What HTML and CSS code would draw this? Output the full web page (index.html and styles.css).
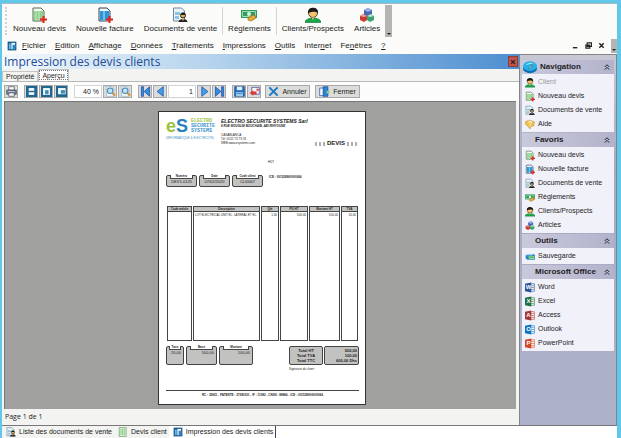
FILE: index.html
```html
<!DOCTYPE html>
<html lang="fr">
<head>
    <meta charset="UTF-8">
    <title>Impression des devis clients</title>
    <meta name="viewport" content="width=device-width, initial-scale=1.0">
    <link rel="stylesheet" href="styles.css">
</head>
<body>
    <!-- Icons -->
    <svg class="sprite" aria-hidden="true">
        <symbol id="i-devis" viewBox="0 0 16 16"><path d="M2 1h8l3 3v10H2z" fill="#f4fbf2" stroke="#4f6a4c"/><path d="M3 4h9v9H3z" fill="#8fd08a"/><path d="M5 4v9M8 4v9" stroke="#c4eabf"/><path d="M12.500 9v7M9 12.500h7" stroke="#e0241c" stroke-width="2"/></symbol>
        <symbol id="i-facture" viewBox="0 0 16 16"><path d="M2 1h8l3 3v10H2z" fill="#eaf5fc" stroke="#345"/><path d="M3 4h9v9H3z" fill="#2f93d6"/><path d="M7 4v9" stroke="#bfe4fa"/><path d="M12.500 9v7M9 12.500h7" stroke="#e0241c" stroke-width="2"/></symbol>
        <symbol id="i-docs" viewBox="0 0 16 16"><path d="M1.500 1h8l3 3v10h-11z" fill="#e8f3fa" stroke="#6f8795"/><path d="M3 5h5v3H3zM3 9h4v3H3z" fill="#8fc3e4"/><circle cx="11" cy="8.500" r="2.500" fill="#e8b04c" stroke="#222"/><path d="M8.500 8a2.500 2.500 0 0 1 5 0z" fill="#222"/><path d="M6.500 15c0-4 9-4 9 0z" fill="#222"/><path d="M10 12l1 2 1-2z" fill="#f0c020"/></symbol>
        <symbol id="i-pay" viewBox="0 0 16 16"><path d="M0 3h16v8H0z" fill="#2f9d5c"/><path d="M1.500 4.500h13v5h-13z" fill="none" stroke="#9fdcb4"/><circle cx="8" cy="7" r="2" fill="#d8f5de"/><path d="M7 11l5-3 3 1-1 3-4 2-3-1z" fill="#e5a83a" stroke="#8d6418" stroke-width=".6"/></symbol>
        <symbol id="i-client" viewBox="0 0 16 16"><path d="M0 15.500c0-6 16-6 16 0z" fill="#16a84a" stroke="#0b6e2d" stroke-width=".6"/><circle cx="8" cy="6" r="4.500" fill="#f4c46c" stroke="#222" stroke-width=".8"/><path d="M3 6C2-1 14-1 13 6 10 4 7 5 3 6z" fill="#1c1a18"/><path d="M6.500 10.500L8 13l1.500-2.500z" fill="#f4c46c"/></symbol>
        <symbol id="i-articles" viewBox="0 0 16 16"><path d="M5 3l4-2 4 2v5L9 10 5 8z" fill="#4767b4"/><path d="M5 3l4-2 4 2-4 2z" fill="#9bb0e4"/><path d="M1 9l3-2 4 2v4l-3 2-4-2z" fill="#c93c32"/><path d="M1 9l3-2 4 2-3 1z" fill="#f0a098"/><path d="M8 9l4-2 3 2v4l-4 2-3-2z" fill="#3ba474"/><path d="M8 9l4-2 3 2-4 1z" fill="#b4e6cc"/></symbol>
        <symbol id="i-app" viewBox="0 0 16 16"><path d="M1 1h14v14H1z" fill="#15588f"/><path d="M3 4h3v9H3z" fill="#68b8e8"/><path d="M7 3h6v10H7z" fill="#eef8ff"/><path d="M9 6h4v7H9z" fill="#2b84c4"/></symbol>
        <symbol id="i-sheet" viewBox="0 0 16 16"><path d="M2 1h11v14H2z" fill="#e4f5df" stroke="#5c8a57"/><path d="M4 3h7v10H4z" fill="#8fd08a"/><path d="M6 3v10M9 3v10" stroke="#d8f2d4"/></symbol>
        <symbol id="i-help" viewBox="0 0 16 16"><path d="M1 3l7-2 7 3-1 6-5 1-1 4-3-4-4-3z" fill="#f3c348" stroke="#a4781c" stroke-width=".7"/><path d="M5.500 5c0-3 5-3 5 0 0 1.500-2.500 1.500-2.500 3M8 9.500v1.500" fill="none" stroke="#fff" stroke-width="1.500"/></symbol>
        <symbol id="i-save" viewBox="0 0 16 16"><path d="M1 6l5-2h8l2 2v7H4l-3-2z" fill="#2e86c8"/><path d="M6 7h9v5H6z" fill="#8be08e"/><path d="M7 9h7" stroke="#256b36"/><path d="M1 6l5-2h8l-3 2z" fill="#9ed4f4"/></symbol>
        <symbol id="i-nav" viewBox="0 0 16 16"><ellipse cx="8" cy="10" rx="8" ry="5" fill="#0d6fae"/><ellipse cx="8" cy="7" rx="8" ry="5.500" fill="#25b0ea"/><path d="M3 6c2-3 7-4 10-1-4-1-7 0-10 1z" fill="#a5e4fb"/><path d="M6 10l5-6-2 5z" fill="#f6e38c" stroke="#15517c" stroke-width=".5"/></symbol>
        <symbol id="i-print" viewBox="0 0 16 16"><path d="M4 1h8v5H4z" fill="#fff" stroke="#3d4a5c"/><path d="M1 6h14v6H1z" fill="#7b8798" stroke="#333d4c"/><path d="M4 10h8v5H4z" fill="#f4f6f8" stroke="#3d4a5c"/><path d="M3 8h9" stroke="#dde3ea"/></symbol>
        <symbol id="i-fit" viewBox="0 0 16 16"><path d="M0 0h16v16H0z" fill="#1e6790"/><path d="M4 3h8v10H4z" fill="#f2fafd"/><path d="M4 8h8" stroke="#1e6790" stroke-width="2"/></symbol>
        <symbol id="i-page" viewBox="0 0 16 16"><path d="M0 0h16v16H0z" fill="#1e6790"/><path d="M3 3h10v10H3z" fill="#f2fafd"/><path d="M6 6h5v6H6z" fill="#3f8cb4"/></symbol>
        <symbol id="i-width" viewBox="0 0 16 16"><path d="M0 0h16v16H0z" fill="#1e6790"/><path d="M3 3h11v9H3z" fill="#f2fafd"/><path d="M7 6h6v5H7z" fill="#3f8cb4"/></symbol>
        <symbol id="i-zoom" viewBox="0 0 16 16"><path d="M2 1h8l3 3v11H2z" fill="#eef7fd" stroke="#98b4c8"/><circle cx="7.500" cy="7" r="4" fill="#bfe4fa" stroke="#4a86b4" stroke-width="1.500"/><path d="M10.500 10l4 4" stroke="#d88a24" stroke-width="2.500"/></symbol>
        <symbol id="i-first" viewBox="0 0 16 16"><path d="M2 1h3v14H2zM14 1v14L6 8z" fill="#2f8fe0" stroke="#1742a4"/></symbol>
        <symbol id="i-prev" viewBox="0 0 16 16"><path d="M12 1v14L3 8z" fill="#3fa0ea" stroke="#1742a4"/></symbol>
        <symbol id="i-next" viewBox="0 0 16 16"><path d="M4 1v14l9-7z" fill="#3fa0ea" stroke="#1742a4"/></symbol>
        <symbol id="i-last" viewBox="0 0 16 16"><path d="M11 1h3v14h-3zM2 1v14l8-7z" fill="#2f8fe0" stroke="#1742a4"/></symbol>
        <symbol id="i-disk" viewBox="0 0 16 16"><path d="M1 1h14v14H1z" fill="#2270c4" stroke="#123c84"/><path d="M4 1h8v5H4z" fill="#dff0fc"/><path d="M3 9h10v6H3z" fill="#9fd0f2"/><path d="M4 11h8" stroke="#2270c4"/></symbol>
        <symbol id="i-mail" viewBox="0 0 16 16"><path d="M4 2h11v10H4z" fill="#f2f3fb" stroke="#3c3c8c"/><path d="M11 4h3v3h-3z" fill="#dc3a34"/><path d="M1 10l5-4v2h5v4H6v2z" fill="#dc3a34"/></symbol>
        <symbol id="i-cancel" viewBox="0 0 16 16"><path d="M2 2l12 12M14 2L2 14" stroke="#1c7cc8" stroke-width="3"/></symbol>
        <symbol id="i-close" viewBox="0 0 16 16"><path d="M1 3h6v11H1z" fill="#f4faff" stroke="#1c4c9c"/><path d="M6 1h7v14H6z" fill="#2c84d4" stroke="#1c4c9c"/><path d="M11 7h4v4h-4z" fill="#7ed08a"/></symbol>
        <symbol id="i-chev" viewBox="0 0 8 8"><path d="M1 4l3-3 3 3M1 7.500l3-3 3 3" fill="none" stroke="#222" stroke-width="1.300"/></symbol>
        <symbol id="i-min" viewBox="0 0 8 8"><path d="M1 6.500h5" stroke="#222" stroke-width="1.600"/></symbol>
        <symbol id="i-restore" viewBox="0 0 8 8"><path d="M2.500 1h5v4h-5z M1 3.500h4.500V7H1z" fill="none" stroke="#222" stroke-width="1.300"/></symbol>
        <symbol id="i-x" viewBox="0 0 8 8"><path d="M1.500 1.500l5 5M6.500 1.500l-5 5" stroke="#222" stroke-width="1.600"/></symbol>
        <symbol id="i-office" viewBox="0 0 16 16"><path d="M9 2h6v12H9z" fill="#fff" stroke="currentColor"/><path d="M10 5h4M10 8h4M10 11h4" stroke="currentColor"/><path d="M0 2l10-2v16L0 14z" fill="currentColor"/></symbol>
    </svg>

    <div class="window">
        <header class="top">
            <div class="ribbon">
                <span class="grip"></span>
                <button class="big"><svg><use href="#i-devis"/></svg>Nouveau devis</button>
                <button class="big"><svg><use href="#i-facture"/></svg>Nouvelle facture</button>
                <button class="big"><svg><use href="#i-docs"/></svg>Documents de vente</button>
                <span class="sep"></span>
                <button class="big"><svg><use href="#i-pay"/></svg>Règlements</button>
                <span class="sep"></span>
                <button class="big"><svg><use href="#i-client"/></svg>Clients/Prospects</button>
                <button class="big"><svg><use href="#i-articles"/></svg>Articles</button>
                <button class="more" aria-label="Plus"></button>
            </div>
            <nav class="menu">
                <svg class="ico"><use href="#i-app"/></svg>
                <button><u>F</u>ichier</button>
                <button><u>E</u>dition</button>
                <button><u>A</u>ffichage</button>
                <button><u>D</u>onnées</button>
                <button><u>T</u>raitements</button>
                <button><u>I</u>mpressions</button>
                <button><u>O</u>utils</button>
                <button>Inter<u>n</u>et</button>
                <button>Fe<u>n</u>êtres</button>
                <button><u>?</u></button>
                <div class="win-buttons">
                    <button aria-label="Réduire"><svg><use href="#i-min"/></svg></button>
                    <button aria-label="Restaurer"><svg><use href="#i-restore"/></svg></button>
                    <button aria-label="Fermer"><svg><use href="#i-x"/></svg></button>
                    <button class="more" aria-label="Plus"></button>
                </div>
            </nav>
        </header>

        <div class="body">
            <main class="main">
                <div class="title">
                    <h1>Impression des devis clients</h1>
                    <button class="close" aria-label="Fermer"><svg><use href="#i-x"/></svg></button>
                </div>
                <div class="tabs">
                    <button>Propriété</button>
                    <button class="active">Aperçu</button>
                </div>
                <div class="tools">
                    <button class="tool" aria-label="Imprimer"><svg><use href="#i-print"/></svg></button>
                    <div class="group">
                        <button class="tool" aria-label="Page entière"><svg><use href="#i-fit"/></svg></button>
                        <button class="tool" aria-label="Taille réelle"><svg><use href="#i-page"/></svg></button>
                        <button class="tool" aria-label="Largeur"><svg><use href="#i-width"/></svg></button>
                    </div>
                    <div class="group">
                        <input class="num" type="text" value="40 %" aria-label="Zoom">
                        <button class="tool" aria-label="Zoom avant"><svg><use href="#i-zoom"/></svg></button>
                        <button class="tool" aria-label="Zoom arrière"><svg><use href="#i-zoom"/></svg></button>
                    </div>
                    <div class="group">
                        <button class="tool" aria-label="Première page"><svg><use href="#i-first"/></svg></button>
                        <button class="tool" aria-label="Page précédente"><svg><use href="#i-prev"/></svg></button>
                        <input class="num" type="text" value="1" aria-label="Page">
                        <button class="tool" aria-label="Page suivante"><svg><use href="#i-next"/></svg></button>
                        <button class="tool" aria-label="Dernière page"><svg><use href="#i-last"/></svg></button>
                    </div>
                    <div class="group">
                        <button class="tool" aria-label="Enregistrer"><svg><use href="#i-disk"/></svg></button>
                        <button class="tool" aria-label="Envoyer"><svg><use href="#i-mail"/></svg></button>
                    </div>
                    <div class="actions">
                        <button class="tool wide"><svg><use href="#i-cancel"/></svg>Annuler</button>
                        <button class="tool wide"><svg><use href="#i-close"/></svg>Fermer</button>
                    </div>
                </div>

                <div class="preview">
                    <article class="sheet">
                        <div class="sheet-head">
                            <div class="logo">
                                <div class="logo-row">
                                    <span class="logo-es"><b>e</b>S</span>
                                    <span class="logo-name"><b>ELECTRO</b><br>SECURITE<br>SYSTEMS</span>
                                </div>
                                <div class="logo-sub">(INFORMATIQUE &amp; ELECTRICITE)</div>
                            </div>
                            <div class="company">
                                <strong>ELECTRO SECURITE SYSTEMS Sarl</strong>
                                <em>8 RUE MOUSLIM BOUCHAIB, ABI RIHYOUNE</em>
                                <p>CASABLANCA<br>Tél :0522 73 73 53<br>WEB:www.esystems.com</p>
                            </div>
                            <div class="doc-type"><i></i>DEVIS<i></i></div>
                        </div>
                        <div class="customer">HDT</div>
                        <div class="refs">
                            <dl class="box"><dt>Numéro</dt><dd>DEV1-0125</dd></dl>
                            <dl class="box"><dt>Date</dt><dd>07/02/2020</dd></dl>
                            <dl class="box"><dt>Code client</dt><dd>CLI0007</dd></dl>
                            <span class="ice">ICE : 001528900000066</span>
                        </div>
                        <table class="lines">
                            <colgroup><col class="c-code"><col><col class="c-qty"><col class="c-price"><col class="c-total"><col class="c-vat"></colgroup>
                            <thead>
                                <tr><th>Code article</th><th>Description</th><th>Qté</th><th>PU HT</th><th>Montant HT</th><th>TVA</th></tr>
                            </thead>
                            <tbody>
                                <tr><td></td><td class="left">LOT ELECTRICAL UNIT EL. LATERAL ET EL.</td><td>1,00</td><td>500,00</td><td>500,00</td><td>20,00</td></tr>
                            </tbody>
                        </table>
                        <div class="totals">
                            <dl class="box t-rate"><dt>Taux</dt><dd>20,00</dd></dl>
                            <dl class="box"><dt>Base</dt><dd>500,00</dd></dl>
                            <dl class="box t-amount"><dt>Montant</dt><dd>100,00</dd></dl>
                            <div class="sums">
                                <div class="sum">Total HT<br>Total TVA<br>Total TTC</div>
                                <div class="sum">500,00<br>100,00<br>600,00 Dhs</div>
                                <span class="sign">Signature du client :</span>
                            </div>
                        </div>
                        <footer class="sheet-foot">RC : 35821 - PATENTE : 37580301 - IF : 11082 - CNSS : 88866 - ICE : 001528900000066</footer>
                    </article>
                </div>
                <div class="status">Page 1 de 1</div>
            </main>

            <aside class="side">
                <section class="panel nav-panel">
                    <h2><svg class="globe"><use href="#i-nav"/></svg>Navigation<svg class="chev"><use href="#i-chev"/></svg></h2>
                    <ul>
                        <li><a href="#" class="off"><svg><use href="#i-client"/></svg>Client</a></li>
                        <li><a href="#"><svg><use href="#i-devis"/></svg>Nouveau devis</a></li>
                        <li><a href="#"><svg><use href="#i-docs"/></svg>Documents de vente</a></li>
                        <li><a href="#"><svg><use href="#i-help"/></svg>Aide</a></li>
                    </ul>
                </section>
                <section class="panel">
                    <h2>Favoris<svg class="chev"><use href="#i-chev"/></svg></h2>
                    <ul>
                        <li><a href="#"><svg><use href="#i-devis"/></svg>Nouveau devis</a></li>
                        <li><a href="#"><svg><use href="#i-facture"/></svg>Nouvelle facture</a></li>
                        <li><a href="#"><svg><use href="#i-docs"/></svg>Documents de vente</a></li>
                        <li><a href="#"><svg><use href="#i-pay"/></svg>Règlements</a></li>
                        <li><a href="#"><svg><use href="#i-client"/></svg>Clients/Prospects</a></li>
                        <li><a href="#"><svg><use href="#i-articles"/></svg>Articles</a></li>
                    </ul>
                </section>
                <section class="panel">
                    <h2>Outils<svg class="chev"><use href="#i-chev"/></svg></h2>
                    <ul>
                        <li><a href="#"><svg><use href="#i-save"/></svg>Sauvegarde</a></li>
                    </ul>
                </section>
                <section class="panel">
                    <h2>Microsoft Office<svg class="chev"><use href="#i-chev"/></svg></h2>
                    <ul>
                        <li><a href="#"><span class="office word"><svg><use href="#i-office"/></svg><b>W</b></span>Word</a></li>
                        <li><a href="#"><span class="office excel"><svg><use href="#i-office"/></svg><b>X</b></span>Excel</a></li>
                        <li><a href="#"><span class="office access"><svg><use href="#i-office"/></svg><b>A</b></span>Access</a></li>
                        <li><a href="#"><span class="office outlook"><svg><use href="#i-office"/></svg><b>O</b></span>Outlook</a></li>
                        <li><a href="#"><span class="office ppt"><svg><use href="#i-office"/></svg><b>P</b></span>PowerPoint</a></li>
                    </ul>
                </section>
            </aside>
        </div>

        <div class="taskbar">
            <button><svg><use href="#i-docs"/></svg>Liste des documents de vente</button>
            <button><svg><use href="#i-sheet"/></svg>Devis client</button>
            <button class="active"><svg><use href="#i-app"/></svg>Impression des devis clients</button>
        </div>
    </div>
</body>
</html>
```
FILE: styles.css
```css
* { box-sizing: border-box; margin: 0; padding: 0; }
body { background: #62c8ea; color: #222; font: 8px/10px "Liberation Sans", Arial, sans-serif; }
button { background: none; border: none; font: inherit; color: inherit; white-space: nowrap; }
svg { display: block; flex: none; }
ul { list-style: none; }
.sprite { position: absolute; width: 0; height: 0; }

.window { height: 100vh; padding: 3px 4px 0 2px; display: flex; flex-direction: column; }

/* top bars */
.top { background: #fbfbf9; border-top: 1px solid #a9b9c0; }
.ribbon { display: flex; align-items: stretch; height: 33px; padding: 1px 0 0 3px; }
.grip { width: 3px; margin: 2px 0; border-left: 2px dotted #d0d0d0; }
.big { display: flex; flex-direction: column; align-items: center; padding: 2px 5px 0; gap: 1px; }
.big svg { width: 16px; height: 16px; }
.sep { width: 1px; margin: 2px 0; background: #d4d4d4; }
.more { width: 7px; background: #b4b4b4; display: flex; align-items: flex-end; justify-content: center; padding-bottom: 2px; }
.more::after { content: ""; border: 2px solid transparent; border-top-color: #222; border-bottom: none; }
.menu { display: flex; align-items: center; height: 17px; padding-left: 5px; gap: 9px; }
.menu .ico { width: 10px; height: 10px; margin-right: -4px; }
.win-buttons { margin-left: auto; display: flex; align-items: center; gap: 6px; }
.win-buttons svg { width: 7px; height: 7px; }
.win-buttons .more { width: 6px; height: 14px; }

/* document window */
.body { flex: 1; min-height: 0; display: flex; }
.main { flex: 1; min-width: 0; display: flex; flex-direction: column; background: #f3f3f1; }
.title { display: flex; align-items: center; justify-content: space-between; height: 15px; padding: 0 1px 0 2px; background: linear-gradient(90deg, #f4f9fd, #b5d3ec 40%, #4d8ed0); }
.title h1 { font: 12px/15px "Open Sans", "Liberation Sans", sans-serif; color: #1f4b94; }
.close { width: 10px; height: 11px; padding: 2px 1px; background: #c4504c; border: 1px solid #84413e; }
.close svg { width: 6px; height: 6px; }
.tabs { display: flex; align-items: flex-end; height: 13px; border-bottom: 1px solid #b8b8b8; font-size: 7px; }
.tabs button { height: 10px; padding: 0 3px; border: 1px solid #c4c4c4; border-bottom: none; }
.tabs .active { height: 12px; background: #fff; outline: 1px dotted #777; outline-offset: -2px; }
.tools { display: flex; align-items: center; gap: 6px; height: 19px; padding: 0 2px; background: #fcfcfc; }
.group { display: flex; gap: 1px; }
.actions { display: flex; gap: 5px; margin-left: -2px; }
.tool { display: flex; align-items: center; justify-content: center; width: 14px; height: 13px; background: #dcdcda; border: 1px solid #a8a8a8; }
.tool svg { width: 11px; height: 11px; }
.tool.wide { width: 45px; gap: 3px; font-size: 7px; }
.num { width: 28px; height: 13px; border: 1px solid #d4d4d4; background: #fff; padding-right: 2px; text-align: right; font: 7px "Liberation Sans", Arial, sans-serif; color: #222; }
.preview { flex: 1; min-height: 0; margin: 0 3px 0 2px; padding: 9px 0 0 3px; background: #a0a09e; border-top: 1px solid #777; border-left: 1px solid #777; overflow: hidden; }
.status { height: 16px; padding-left: 3px; font: 7px/16px "Open Sans", "Liberation Sans", sans-serif; }

/* printed sheet */
.sheet { width: 208px; aspect-ratio: 208 / 294; margin: 0 auto; padding: 6px 6px 0 7px; background: #fff; border: 1px solid #333; font-size: 3px; line-height: 4px; display: flex; flex-direction: column; }
.sheet-head { display: flex; gap: 3px; height: 29px; white-space: nowrap; }
.logo { width: 52px; color: #3a94c8; }
.logo-row { display: flex; align-items: center; gap: 3px; height: 16px; }
.logo-es { font-size: 18px; line-height: 12px; font-weight: bold; color: #2c7fb8; }
.logo-es b, .logo-name b { color: #9ac43c; }
.logo-name { font: bold 5px/5px "Liberation Mono", monospace; }
.logo-sub { margin-top: 2px; }
.company strong { display: block; font-size: 5px; line-height: 6px; font-style: italic; }
.company em { display: block; font-weight: bold; }
.company p { margin-top: 5px; }
.doc-type { align-self: flex-end; display: flex; align-items: center; gap: 2px; margin: 0 2px 0 auto; font-size: 6px; line-height: 7px; font-weight: bold; }
.doc-type i { width: 10px; height: 4px; background: repeating-linear-gradient(90deg, #777 0 2px, #fff 2px 4px); opacity: .6; }
.customer { padding: 13px 0 11px 102px; }
.refs { display: flex; gap: 2px; height: 12px; }
.box { width: 31px; background: #c2c2c0; border: 1px solid #444; border-radius: 2px; text-align: center; }
.box dt { width: 80%; margin: -1px auto 0; background: #fff; border: 1px solid #444; border-top: none; line-height: 3px; font-weight: bold; }
.box dd { padding-top: 1px; font-size: 4px; }
.ice { padding-left: 4px; font-weight: bold; }
.lines { width: 100%; height: 135px; margin-top: 19px; table-layout: fixed; border-collapse: separate; border-spacing: 1px 0; }
.lines th { height: 6px; background: #c2c2c0; border: 1px solid #444; }
.lines td { border: 1px solid #444; border-top: none; vertical-align: top; text-align: right; padding: 1px; white-space: nowrap; overflow: hidden; }
.lines .left { text-align: left; }
.c-code { width: 25px; }
.c-qty { width: 18px; }
.c-price { width: 28px; }
.c-total { width: 31px; }
.c-vat { width: 17px; }
.totals { display: flex; gap: 2px; height: 19px; margin-top: 5px; }
.totals dd { text-align: right; padding-right: 2px; }
.totals .t-rate { width: 18px; }
.totals .t-amount { width: 34px; }
.sums { display: grid; grid-template-columns: 34px 35px; column-gap: 1px; grid-template-rows: 19px 8px; margin-left: auto; }
.sum { background: #c2c2c0; border: 1px solid #444; border-radius: 2px; padding: 1px; line-height: 5px; font-size: 4px; font-weight: bold; text-align: center; }
.sum + .sum { text-align: right; }
.sign { grid-column: 1 / 3; padding-top: 2px; }
.sheet-foot { margin-top: 25px; padding-top: 2px; border-top: 1px solid #444; text-align: center; font-weight: bold; }

/* side panels */
.side { width: 98px; padding: 5px 2px 0 2px; background: linear-gradient(#c8c8d4, #a9a9c3 30%, #adb2ca); border: 1px solid #84848c; border-bottom: none; display: flex; flex-direction: column; gap: 1px; }
.panel { background: #f1f1fa; }
.panel h2 { display: flex; align-items: center; height: 14px; padding: 0 4px 0 13px; background: linear-gradient(90deg, #c9c9dc, #b2b2cc); font-size: 8px; }
.nav-panel h2 { padding-left: 1px; gap: 3px; }
.globe { width: 14px; height: 14px; }
.chev { width: 6px; height: 6px; margin-left: auto; }
.panel ul { padding: 1px 0; }
.panel a { display: flex; align-items: center; gap: 3px; height: 14px; padding-left: 3px; color: #222; text-decoration: none; font-size: 7px; white-space: nowrap; }
.panel a svg { width: 10px; height: 11px; }
.panel .off { color: #999; }
.office { position: relative; }
.office b { position: absolute; left: 0; top: 1px; width: 7px; font-size: 6px; line-height: 9px; text-align: center; color: #fff; }
.word { color: #2b5797; }
.excel { color: #1e7145; }
.access { color: #a4373a; }
.outlook { color: #0f74c4; }
.ppt { color: #d24726; }

/* open windows */
.taskbar { display: flex; height: 13px; background: #fff; border-top: 1px solid #777; font-size: 7px; }
.taskbar button { display: flex; align-items: center; gap: 3px; padding: 0 2px 0 4px; background: #f3f3f1; }
.taskbar svg { width: 10px; height: 10px; }
.taskbar .active { background: #fff; border-right: 1px solid #444; }
```
